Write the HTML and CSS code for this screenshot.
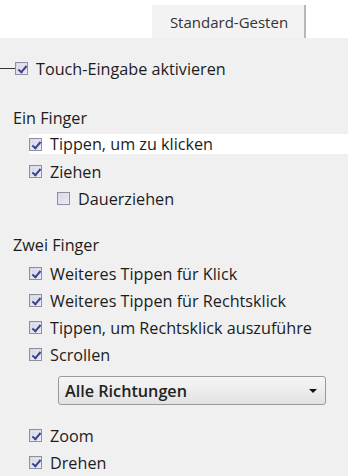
FILE: index.html
```html
<!DOCTYPE html>
<html lang="de">
<head>
<meta charset="utf-8">
<link rel="stylesheet" href="styles.css">
</head>
<body>
<div class="tabbar">
  <div class="tab">Standard-Gesten</div>
</div>
<div class="panel">
  <div class="row top">
    <span class="lead"></span>
    <span class="cb checked"></span>
    <span class="label">Touch-Eingabe aktivieren</span>
  </div>

  <div class="heading first">Ein Finger</div>
  <div class="row l1 hl">
    <span class="cb checked"></span>
    <span class="label">Tippen, um zu klicken</span>
  </div>
  <div class="row l1">
    <span class="cb checked"></span>
    <span class="label">Ziehen</span>
  </div>
  <div class="row l2">
    <span class="cb"></span>
    <span class="label">Dauerziehen</span>
  </div>

  <div class="heading second">Zwei Finger</div>
  <div class="row l1">
    <span class="cb checked"></span>
    <span class="label">Weiteres Tippen für Klick</span>
  </div>
  <div class="row l1">
    <span class="cb checked"></span>
    <span class="label">Weiteres Tippen für Rechtsklick</span>
  </div>
  <div class="row l1">
    <span class="cb checked"></span>
    <span class="label">Tippen, um Rechtsklick auszuführe</span>
  </div>
  <div class="row l1">
    <span class="cb checked"></span>
    <span class="label">Scrollen</span>
  </div>
  <div class="select">
    <span class="sel-text">Alle Richtungen</span>
    <span class="arrow"></span>
  </div>
  <div class="row l1 after-select">
    <span class="cb checked"></span>
    <span class="label">Zoom</span>
  </div>
  <div class="row l1">
    <span class="cb checked"></span>
    <span class="label">Drehen</span>
  </div>
</div>
</body>
</html>
```
FILE: styles.css
```css
* { box-sizing: border-box; }
html, body {
  margin: 0;
  padding: 0;
  width: 348px;
  height: 476px;
  overflow: hidden;
  background: #f0f0f0;
  font-family: "Open Sans", "Noto Sans", sans-serif;
  font-size: 16.2px;
  font-weight: 500;
  color: #1c1c1c;
}
.tabbar {
  height: 38px;
  background: #fff;
  padding-left: 152px;
  padding-top: 5px;
  display: flex;
}
.tab {
  width: 154px;
  height: 33px;
  background: #f3f3f3;
  border-right: 2px solid #b8b8b8;
  display: flex;
  align-items: center;
  justify-content: center;
  color: #333;
  font-size: 15px;
  padding-left: 2px;
}
.panel {
  background: #f0f0f0;
  padding-top: 17px;
  display: flex;
  flex-direction: column;
  height: 438px;
}
.row {
  height: 27px;
  display: flex;
  align-items: center;
  flex-shrink: 0;
}
.lead {
  width: 15px;
  height: 1px;
  background: #333;
}
.row.l1 { padding-left: 29px; }
.row.l2 { padding-left: 57px; }
.row.hl {
  margin-left: 15px;
  padding-left: 14px;
  padding-top: 3px;
  padding-bottom: 4px;
  background: #fff;
  background-clip: content-box;
}
.cb {
  width: 13px;
  height: 13px;
  border: 1px solid #8e8f9f;
  background: linear-gradient(135deg, #cfd2e2, #f0f0f6);
  position: relative;
  flex-shrink: 0;
  margin-right: 8px;
}
.cb::before {
  content: "";
  position: absolute;
  inset: 1px;
  border: 1px solid #e2e3ec;
}
.cb.checked::after {
  content: "";
  position: absolute;
  left: 4px;
  top: 1px;
  width: 3px;
  height: 7px;
  border-right: 2px solid #3d4290;
  border-bottom: 2px solid #3d4290;
  transform: rotate(40deg);
}
.label { white-space: nowrap; }
.heading {
  height: 26px;
  display: flex;
  align-items: center;
  padding-left: 13px;
  flex-shrink: 0;
}
.heading.first { margin-top: 23px; }
.heading.second { margin-top: 20px; margin-bottom: 2px; }
.select {
  margin-left: 58px;
  margin-top: 8px;
  width: 268px;
  height: 29px;
  border: 1px solid #9a9a9a;
  border-radius: 3px;
  background: linear-gradient(#f6f6f6, #e2e2e2);
  display: flex;
  align-items: center;
  justify-content: space-between;
  padding: 0 8px 0 6px;
  flex-shrink: 0;
}
.sel-text { color: #222; font-weight: 600; }
.arrow {
  width: 0;
  height: 0;
  border-left: 4px solid transparent;
  border-right: 4px solid transparent;
  border-top: 4px solid #111;
}
.row.after-select { margin-top: 17px; }
```
